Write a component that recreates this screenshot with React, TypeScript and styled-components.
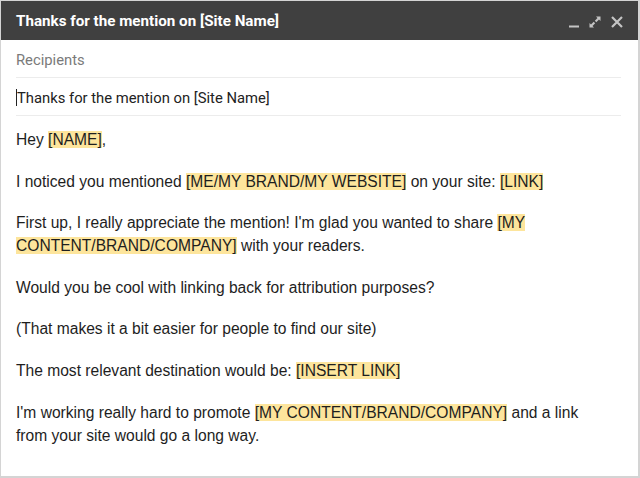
import React from 'react';
import styled, { createGlobalStyle } from 'styled-components';

const GlobalStyle = createGlobalStyle`
  html, body {
    margin: 0;
    padding: 0;
    background: #fff;
  }
  body {
    width: 640px;
    height: 478px;
    overflow: hidden;
  }
`;

const Window = styled.div`
  box-sizing: border-box;
  width: 640px;
  height: 478px;
  display: flex;
  flex-direction: column;
  border: 1px solid #d4d4d4;
  border-right-width: 2px;
  border-bottom-width: 2px;
  background: #fff;
  overflow: hidden;
`;

const TitleBar = styled.div`
  flex: 0 0 39px;
  display: flex;
  align-items: center;
  justify-content: space-between;
  padding: 0 14px 0 15px;
  background: #404040;
  color: #fff;
  font-family: Roboto, 'Liberation Sans', sans-serif;
  font-size: 15.2px;
  font-weight: 700;
`;

const Controls = styled.div`
  display: flex;
  align-items: center;
  gap: 8px;
  padding-top: 2px;
`;

const Field = styled.div<{ $muted?: boolean }>`
  margin: 0 17px 0 15px;
  height: 38px;
  display: flex;
  align-items: center;
  padding-top: 2px;
  box-sizing: border-box;
  border-bottom: 1px solid #ececec;
  font-family: Roboto, 'Liberation Sans', sans-serif;
  font-size: 14.8px;
  color: ${({ $muted }) => ($muted ? '#7a7a7a' : '#222')};
`;

const Caret = styled.span`
  display: inline-block;
  width: 1px;
  height: 17px;
  background: #222;
`;

const Body = styled.div`
  padding: 12px 30px 0 15px;
  font-family: 'Liberation Sans', Arial, sans-serif;
  font-size: 15.6px;
  line-height: 23px;
  color: #1e1e1e;
`;

const Para = styled.p`
  margin: 0 0 18.6px 0;
`;

const Mark = styled.span`
  background: #fde59c;
`;

const IconSvg = styled.svg`
  display: block;
`;

const Minimize = () => (
  <IconSvg width="12" height="14" viewBox="0 0 12 14">
    <rect x="1" y="10.5" width="10" height="2" fill="#c4c4c4" />
  </IconSvg>
);

const Expand = () => (
  <IconSvg width="14" height="14" viewBox="0 0 14 14">
    <path d="M8 1.5h4.5V6L11 4.5 8.3 7.2 6.8 5.7 9.5 3z" fill="#c4c4c4" />
    <path d="M6 12.5H1.5V8L3 9.5l2.7-2.7 1.5 1.5L4.5 11z" fill="#c4c4c4" />
  </IconSvg>
);

const Close = () => (
  <IconSvg width="14" height="14" viewBox="0 0 14 14">
    <path d="M2 2l10 10M12 2L2 12" stroke="#c4c4c4" strokeWidth="2.2" />
  </IconSvg>
);

export default function App() {
  return (
    <>
      <GlobalStyle />
      <Window>
        <TitleBar>
          <span>Thanks for the mention on [Site Name]</span>
          <Controls>
            <Minimize />
            <Expand />
            <Close />
          </Controls>
        </TitleBar>
        <Field $muted>Recipients</Field>
        <Field>
          <Caret />
          Thanks for the mention on [Site Name]
        </Field>
        <Body>
          <Para>
            Hey <Mark>[NAME]</Mark>,
          </Para>
          <Para>
            I noticed you mentioned <Mark>[ME/MY BRAND/MY WEBSITE]</Mark> on your site: <Mark>[LINK]</Mark>
          </Para>
          <Para>
            First up, I really appreciate the mention! I'm glad you wanted to share{' '}
            <Mark>[MY CONTENT/BRAND/COMPANY]</Mark> with your readers.
          </Para>
          <Para>Would you be cool with linking back for attribution purposes?</Para>
          <Para>(That makes it a bit easier for people to find our site)</Para>
          <Para>
            The most relevant destination would be: <Mark>[INSERT LINK]</Mark>
          </Para>
          <Para>
            I'm working really hard to promote <Mark>[MY CONTENT/BRAND/COMPANY]</Mark> and a link from your site
            would go a long way.
          </Para>
        </Body>
      </Window>
    </>
  );
}
